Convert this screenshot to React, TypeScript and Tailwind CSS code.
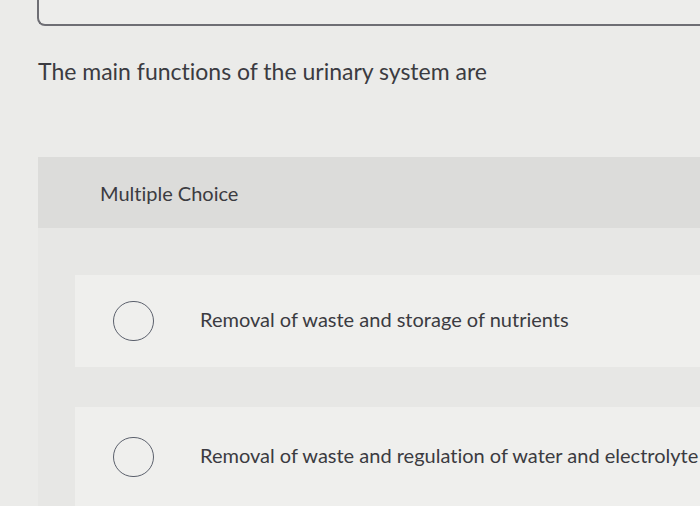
import React from "react"

// ── Answer options ────────────────────────────────────────────

const OPTIONS = [
  'Removal of waste and storage of nutrients',
  'Removal of waste and regulation of water and electrolyte',
]

function Radio() {
  return (
    <span className="block w-[41px] h-[40px] shrink-0 rounded-full border-[1.5px] border-[#5b606c]" aria-hidden="true" />
  )
}

export default function App() {
  return (
    <div
      className="w-[700px] h-[506px] overflow-hidden bg-[#ebebe9] text-[#3b3b41] [font-variant-ligatures:none]"
      style={{ fontFamily: 'Lato, "Open Sans", sans-serif' }}
    >
      {/* ── Previous answer box (cut off) ── */}
      <div className="ml-[37px] -mr-4 h-[26px] border-l-2 border-b-2 border-[#6e6e74] rounded-bl-[8px] bg-[#ededeb]" />

      {/* ── Question ── */}
      <p className="ml-[38px] mt-[30px] text-[23px] leading-[30px]">
        The main functions of the urinary system are
      </p>

      {/* ── Answer panel ── */}
      <section className="ml-[38px] mt-[71px]">
        <div className="h-[71px] flex items-center pl-[62px] bg-[#dcdcda] text-[20px]">
          Multiple Choice
        </div>

        <div className="pt-[47px] bg-[#e7e7e5]">
          <div className="ml-[37px] flex flex-col gap-[40px]">
            {OPTIONS.map((text, i) => (
              <label
                key={text}
                className={`${i === 0 ? 'h-[92px]' : 'h-[104px] pb-[4px]'} flex items-center gap-[46px] pl-[38px] bg-[#efefed] text-[20px] whitespace-nowrap`}
              >
                <Radio />
                <span className="-mt-1">{text}</span>
              </label>
            ))}
          </div>
        </div>
      </section>
    </div>
  )
}
